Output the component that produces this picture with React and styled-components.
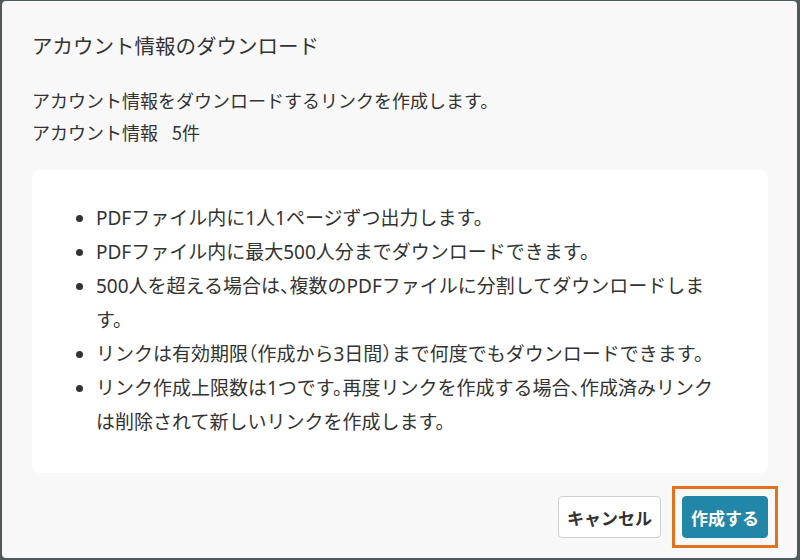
import React from 'react';
import styled, { createGlobalStyle } from 'styled-components';

const GlobalStyle = createGlobalStyle`
  html, body {
    margin: 0;
    padding: 0;
    background: #50585a;
  }
  body {
    font-family: "Noto Sans CJK JP", "Noto Sans", sans-serif;
    color: #333;
  }
`;

const notes = [
  'PDFファイル内に1人1ページずつ出力します。',
  'PDFファイル内に最大500人分までダウンロードできます。',
  '500人を超える場合は、複数のPDFファイルに分割してダウンロードします。',
  'リンクは有効期限（作成から3日間）まで何度でもダウンロードできます。',
  'リンク作成上限数は1つです。再度リンクを作成する場合、作成済みリンクは削除されて新しいリンクを作成します。',
];

const App = () => {
  return (
    <>
      <GlobalStyle />
      <Dialog>
        <Title>アカウント情報のダウンロード</Title>
        <Description>
          <Line>アカウント情報をダウンロードするリンクを作成します。</Line>
          <Line>
            アカウント情報<Count>5件</Count>
          </Line>
        </Description>
        <NoteBox>
          <NoteList>
            {notes.map((n, i) => (
              <NoteItem key={i}>{n}</NoteItem>
            ))}
          </NoteList>
        </NoteBox>
        <Footer>
          <Button>キャンセル</Button>
          <FocusRing>
            <Button primary>作成する</Button>
          </FocusRing>
        </Footer>
      </Dialog>
    </>
  );
};

export default App;

const Dialog = styled.div`
  box-sizing: border-box;
  width: 795px;
  height: 557px;
  margin: 1px 0 0 2px;
  background: #f8f8f8;
  border-radius: 4px;
  padding: 28px 29px 10px 30px;
  display: flex;
  flex-direction: column;
`;

const Title = styled.h2`
  margin: 0;
  font-size: 20.5px;
  font-weight: 400;
  line-height: 32px;
  color: #333;
`;

const Description = styled.div`
  margin-top: 23px;
  display: flex;
  flex-direction: column;
`;

const Line = styled.p`
  margin: 0;
  font-size: 18px;
  line-height: 32px;
  color: #333;
`;

const Count = styled.span`
  margin-left: 14px;
`;

const NoteBox = styled.div`
  margin-top: 22px;
  background: #fff;
  border-radius: 8px;
  padding: 31px 49px 34px 64px;
`;

const NoteList = styled.ul`
  margin: 0;
  padding: 0;
  list-style: disc;
`;

const NoteItem = styled.li`
  font-family: "Noto Sans", "Noto Sans CJK JP", sans-serif;
  font-feature-settings: "halt";
  font-size: 19px;
  line-height: 34px;
  color: #333;
`;

const Footer = styled.div`
  margin-top: auto;
  margin-right: -10px;
  display: flex;
  justify-content: flex-end;
  align-items: center;
  gap: 11px;
`;

const FocusRing = styled.div`
  display: flex;
  padding: 7px;
  border: 3px solid #e2711d;
`;

const Button = styled.button`
  font-family: "Noto Sans CJK JP", sans-serif;
  font-size: 17px;
  font-weight: 700;
  height: 42px;
  padding: 0 8px;
  border-radius: 4px;
  cursor: pointer;
  background: ${(p) => (p.primary ? '#2286a8' : '#fff')};
  color: ${(p) => (p.primary ? '#fff' : '#333')};
  border: 1px solid ${(p) => (p.primary ? '#2286a8' : '#cfcfcf')};
`;
